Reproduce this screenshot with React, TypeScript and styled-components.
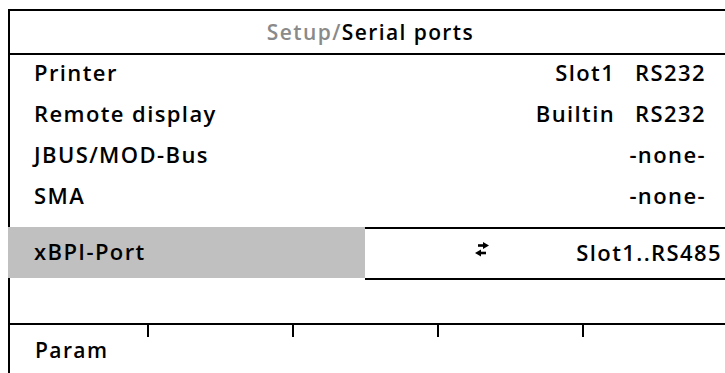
import React from "react";
import styled, { createGlobalStyle } from "styled-components";

const Global = createGlobalStyle`
  html, body { margin: 0; padding: 0; background: #fff; overflow: hidden; }
  body { font-family: "Open Sans", "DejaVu Sans", sans-serif; color: #000; }
`;

const Page = styled.div`
  width: 725px;
  height: 373px;
  padding: 9px 0 0 8px;
  box-sizing: border-box;
  overflow: hidden;
`;

const Frame = styled.div`
  width: 717px;
  border-left: 2px solid #000;
  border-top: 2px solid #000;
  box-sizing: border-box;
  display: flex;
  flex-direction: column;
`;

const Header = styled.div`
  height: 44px;
  border-bottom: 2px solid #000;
  box-sizing: border-box;
  display: flex;
  align-items: center;
  justify-content: center;
  padding-left: 6px;
  font-size: 21px;
  font-weight: 600;
  letter-spacing: 1.4px;
`;

const Crumb = styled.span`
  color: #8a8a8a;
`;

const List = styled.div`
  display: flex;
  flex-direction: column;
`;

const Row = styled.div`
  height: 41px;
  display: flex;
  align-items: center;
  justify-content: space-between;
  padding: 0 19px 7px 24px;
  box-sizing: border-box;
  font-size: 22px;
  font-weight: 600;
  letter-spacing: 1.4px;
`;

const Value = styled.span`
  display: flex;
  gap: 20px;
`;

const SelectedRow = styled.div`
  margin-top: 8px;
  margin-left: -2px;
  height: 53px;
  display: flex;
  align-items: flex-start;
  font-size: 22px;
  font-weight: 600;
  letter-spacing: 1.4px;
`;

const SelectedLabel = styled.div`
  width: 357px;
  height: 51px;
  background: #c0c0c0;
  display: flex;
  align-items: center;
  padding: 0 0 3px 26px;
  box-sizing: border-box;
`;

const SelectedValue = styled.div`
  flex: 1;
  height: 53px;
  border-top: 2px solid #000;
  border-bottom: 2px solid #000;
  box-sizing: border-box;
  display: flex;
  align-items: center;
  padding: 0 3px 3px 0;
`;

const ArrowSlot = styled.div`
  width: 124px;
  display: flex;
  justify-content: flex-end;
  padding-bottom: 5px;
`;

const ValueText = styled.span`
  margin-left: auto;
`;

const Spacer = styled.div`
  height: 43px;
`;

const Footer = styled.div`
  border-top: 2px solid #000;
  height: 50px;
  display: grid;
  grid-template-columns: 139px 145px 145px 145px 1fr;
`;

const Key = styled.div<{ $tick?: boolean }>`
  position: relative;
  display: flex;
  align-items: center;
  padding-left: 25px;
  font-size: 21px;
  font-weight: 600;
  letter-spacing: 1.4px;
  &::after {
    content: "";
    display: ${(p) => (p.$tick ? "block" : "none")};
    position: absolute;
    right: 0;
    top: 0;
    width: 2px;
    height: 12px;
    background: #000;
  }
`;

const SwapIcon = () => (
  <svg width="14" height="15" viewBox="0 0 14 15">
    <path d="M3 3.5 H9" stroke="#000" strokeWidth="2.6" />
    <path d="M8 0 L14 3.5 L8 7 Z" fill="#000" />
    <path d="M11 11 H5" stroke="#000" strokeWidth="2.6" />
    <path d="M6 7.5 L0 11 L6 14.5 Z" fill="#000" />
  </svg>
);

const rows: [string, string[]][] = [
  ["Printer", ["Slot1", "RS232"]],
  ["Remote display", ["Builtin", "RS232"]],
  ["JBUS/MOD-Bus", ["-none-"]],
  ["SMA", ["-none-"]],
];

export default function App() {
  return (
    <>
      <Global />
      <Page>
        <Frame>
          <Header>
            <Crumb>Setup/</Crumb>Serial ports
          </Header>
          <List>
            {rows.map(([l, v]) => (
              <Row key={l}>
                <span>{l}</span>
                <Value>
                  {v.map((p) => (
                    <span key={p}>{p}</span>
                  ))}
                </Value>
              </Row>
            ))}
          </List>
          <SelectedRow>
            <SelectedLabel>xBPI-Port</SelectedLabel>
            <SelectedValue>
              <ArrowSlot>
                <SwapIcon />
              </ArrowSlot>
              <ValueText>Slot1..RS485</ValueText>
            </SelectedValue>
          </SelectedRow>
          <Spacer />
          <Footer>
            <Key $tick>Param</Key>
            <Key $tick />
            <Key $tick />
            <Key $tick />
            <Key />
          </Footer>
        </Frame>
      </Page>
    </>
  );
}
